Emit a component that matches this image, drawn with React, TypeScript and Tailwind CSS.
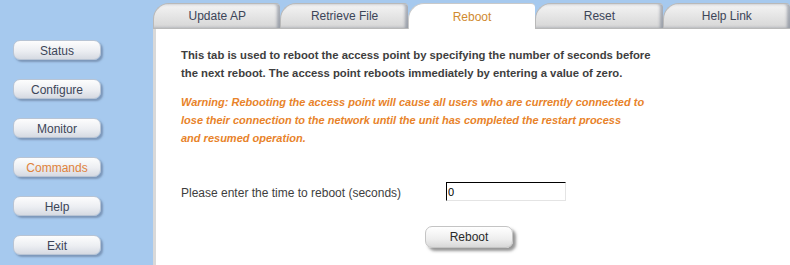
import { useState } from "react"

const NAV = ["Status", "Configure", "Monitor", "Commands", "Help", "Exit"]
const TABS = ["Update AP", "Retrieve File", "Reboot", "Reset", "Help Link"]

function NavButton({ label, active }: { label: string; active?: boolean }) {
  return (
    <button
      className={`h-[20px] w-[88px] rounded-[7px] border border-[#b8c4d4] bg-[linear-gradient(180deg,#fdfdfd_0%,#eceef2_55%,#d6dae2_100%)] text-[12px] leading-[20px] shadow-[2px_2px_2px_rgba(90,110,140,0.55)] ${
        active ? "text-[#e0823a]" : "text-[#3c4558]"
      }`}
    >
      {label}
    </button>
  )
}

export default function App() {
  const [seconds, setSeconds] = useState("0")
  const active = "Reboot"

  return (
    <div className="flex h-[265px] w-[790px] overflow-hidden bg-[#a6c9ee] font-['Liberation_Sans',Arial,sans-serif]">
      <div className="flex w-[153px] shrink-0 flex-col gap-[19px] pl-[13px] pt-[40px]">
        {NAV.map((n) => (
          <NavButton key={n} label={n} active={n === "Commands"} />
        ))}
      </div>

      <div className="flex flex-1 flex-col">
        <div className="flex h-[29px] items-end pt-[3px]">
          {TABS.map((t) => (
            <div
              key={t}
              className={`flex h-[26px] flex-1 items-center justify-center rounded-tl-[16px] rounded-tr-[4px] border-l border-t text-[12px] ${
                t === active
                  ? "border-[#c9c9c9] bg-white text-[#d08a30]"
                  : "border-b border-[#b9b9b9] bg-[linear-gradient(180deg,#f4f4f4_0%,#e2e2e2_60%,#d6d6d6_100%)] text-[#3c4558] shadow-[inset_-3px_0_3px_rgba(80,90,110,0.45)]"
              }`}
            >
              {t}
            </div>
          ))}
        </div>

        <div className="flex-1 border-l-[3px] border-[#d9d9d9] bg-white pl-[25px] pt-[17px]">
          <p className="text-[11.3px] font-bold leading-[18px] text-[#3e3e3e]">
            This tab is used to reboot the access point by specifying the number of seconds before
            <br />
            the next reboot. The access point reboots immediately by entering a value of zero.
          </p>
          <p className="mt-[11px] text-[11px] font-bold italic leading-[18px] text-[#e8832a]">
            Warning: Rebooting the access point will cause all users who are currently connected to
            <br />
            lose their connection to the network until the unit has completed the restart process
            <br />
            and resumed operation.
          </p>

          <div className="mt-[34px] flex items-center">
            <span className="w-[265px] pt-[3px] text-[12px] text-[#3e3e3e]">Please enter the time to reboot (seconds)</span>
            <input
              value={seconds}
              onChange={(e) => setSeconds(e.target.value)}
              className="h-[19px] w-[120px] border border-b-[#e4e4e4] border-l-black border-r-[#e4e4e4] border-t-black pl-[1px] text-[11px] text-black outline-none"
            />
          </div>

          <div className="mt-[24px] flex pl-[244px]">
            <button className="h-[22px] w-[88px] rounded-[7px] border border-[#c4c4c4] bg-[linear-gradient(180deg,#ffffff_0%,#eeeeee_60%,#d8d8d8_100%)] text-[12px] leading-[20px] text-[#2a2a2a] shadow-[3px_3px_3px_rgba(80,80,80,0.6)]">
              Reboot
            </button>
          </div>
        </div>
      </div>
    </div>
  )
}
